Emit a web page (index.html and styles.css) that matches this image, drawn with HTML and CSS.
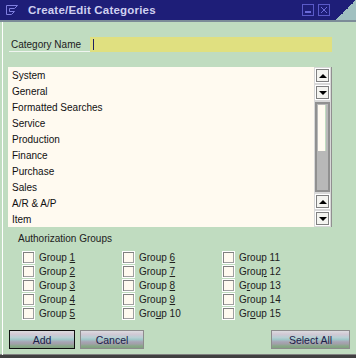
FILE: index.html
```html
<!DOCTYPE html>
<html>
<head>
<meta charset="utf-8">
<link rel="stylesheet" href="styles.css">
</head>
<body>
<div class="win">
  <div class="titlebar">
    <svg class="ticon" width="12" height="10" viewBox="0 0 12 10"><path d="M0.5 0.5 H11.5 L8.5 3.5 H3.5 V6.5 H8.5 L5.5 9.5 H0.5 Z" fill="none" stroke="#8080e0" stroke-width="1"/></svg>
    <span class="ttext">Create/Edit Categories</span>
    <span class="tbtn"><svg width="12" height="12" viewBox="0 0 12 12"><rect x="0.5" y="0.5" width="11" height="11" fill="none" stroke="#5a5ac8"/><rect x="3" y="7" width="6" height="2" fill="#6a6ad8"/></svg></span>
    <span class="tbtn"><svg width="12" height="12" viewBox="0 0 12 12"><rect x="0.5" y="0.5" width="11" height="11" fill="none" stroke="#5a5ac8"/><path d="M3 3 L9 9 M9 3 L3 9" stroke="#6a6ad8" stroke-width="1"/></svg></span>
    <span class="corner"></span>
  </div>
  <div class="content">
    <div class="namerow">
      <span class="namelabel">Category Name</span>
      <span class="nameinput"><span class="caret"></span></span>
    </div>
    <div class="list">
      <div class="items">
        <div class="item">System</div>
        <div class="item">General</div>
        <div class="item">Formatted Searches</div>
        <div class="item">Service</div>
        <div class="item">Production</div>
        <div class="item">Finance</div>
        <div class="item">Purchase</div>
        <div class="item">Sales</div>
        <div class="item">A/R &amp; A/P</div>
        <div class="item">Item</div>
      </div>
      <div class="scroll">
        <span class="sbtn"><span class="up"></span></span>
        <span class="sbtn"><span class="down"></span></span>
        <span class="track"><span class="trackfree"></span><span class="thumb"></span></span>
        <span class="sbtn"><span class="up"></span></span>
        <span class="sbtn"><span class="down"></span></span>
      </div>
    </div>
    <div class="authlabel">Authorization Groups</div>
    <div class="groups">
      <label class="grp"><span class="cb"></span><span>Group <u>1</u></span></label>
      <label class="grp"><span class="cb"></span><span>Group <u>6</u></span></label>
      <label class="grp"><span class="cb"></span><span>Group 11</span></label>
      <label class="grp"><span class="cb"></span><span>Group <u>2</u></span></label>
      <label class="grp"><span class="cb"></span><span>Group <u>7</u></span></label>
      <label class="grp"><span class="cb"></span><span>Grou<u>p</u> 12</span></label>
      <label class="grp"><span class="cb"></span><span>Group <u>3</u></span></label>
      <label class="grp"><span class="cb"></span><span>Group <u>8</u></span></label>
      <label class="grp"><span class="cb"></span><span>G<u>r</u>oup 13</span></label>
      <label class="grp"><span class="cb"></span><span>Group <u>4</u></span></label>
      <label class="grp"><span class="cb"></span><span>Group <u>9</u></span></label>
      <label class="grp"><span class="cb"></span><span>Group 14</span></label>
      <label class="grp"><span class="cb"></span><span>Group <u>5</u></span></label>
      <label class="grp"><span class="cb"></span><span>Gro<u>u</u>p 10</span></label>
      <label class="grp"><span class="cb"></span><span>Gr<u>o</u>up 15</span></label>
    </div>
    <div class="btnrow">
      <span class="btn btn-add">Add</span>
      <span class="btn btn-cancel">Cancel</span>
      <span class="btn btn-all">Select All</span>
    </div>
  </div>
</div>
</body>
</html>
```
FILE: styles.css
```css
html, body { margin: 0; padding: 0; }
body { font-family: "Liberation Sans", Arial, sans-serif; font-size: 10px; color: #101010; background: #c0dcc0; }
.win { width: 356px; height: 358px; background: #c0dcc0; display: flex; flex-direction: column; box-sizing: border-box; border-bottom: 3px solid #404040; box-shadow: inset 0 -1px 0 #808080; overflow: hidden; }
.titlebar { height: 20px; background: #1e1e78; display: flex; align-items: center; border-bottom: 2px solid #7c8c98; flex: none; }
.ticon { margin-left: 6px; margin-top: -1px; }
.ttext { margin-left: 10px; font-weight: bold; font-size: 11.5px; color: #d0d0f0; letter-spacing: 0.2px; }
.tbtn { display: flex; width: 12px; height: 12px; }
.tbtn:nth-of-type(2) { margin-left: auto; }
.tbtn + .tbtn { margin-left: 4px; }
.corner { width: 20px; height: 20px; margin-left: 6px; align-self: flex-start; background: linear-gradient(to bottom right, #1e1e78 50%, #a0c0c0 50%); }
.content { flex: 1; margin-left: 2px; border-left: 1px solid #ffffff; display: flex; flex-direction: column; }
.namerow { display: flex; margin-top: 15px; height: 15px; }
.namelabel { margin-left: 6px; width: 79px; padding-left: 2px; border-bottom: 1px solid #f0f4f0; line-height: 15px; color: #202020; }
.nameinput { width: 242px; height: 15px; background: #e0e080; display: flex; align-items: center; }
.caret { width: 1px; height: 11px; background: #202060; margin-left: 3px; }
.list { margin-top: 15px; margin-left: 5px; width: 324px; height: 160px; background: #fffaf0; display: flex; }
.items { flex: 1; padding-top: 1px; padding-left: 4px; }
.item { height: 16px; line-height: 16px; color: #101010; }
.scroll { width: 18px; background: #d8d8d8; box-shadow: inset -1px 0 #909090; display: flex; flex-direction: column; padding: 1px 2px 1px 1px; box-sizing: border-box; gap: 2px; }
.sbtn { height: 15px; box-sizing: border-box; border: 1px solid #ffffff; box-shadow: inset 1px 1px #808080, inset -1px -1px #808080; background: #f4f4f0; display: flex; align-items: center; justify-content: center; flex: none; }
.up { width: 0; height: 0; border-left: 4px solid transparent; border-right: 4px solid transparent; border-bottom: 4px solid #000; }
.down { width: 0; height: 0; border-left: 4px solid transparent; border-right: 4px solid transparent; border-top: 4px solid #000; }
.track { flex: 1; border: 2px solid #909090; display: flex; flex-direction: column; background: #b8b8b8; }
.trackfree { height: 46px; background: #fffaf0; border-right: 1px solid #c0dcc0; margin: 1px 2px 0 1px; }
.thumb { flex: 1; background: #b8b8b8; }
.authlabel { margin-top: 5px; margin-left: 15px; line-height: 14px; color: #202020; }
.groups { margin-top: 4px; margin-left: 19px; display: grid; grid-template-columns: 100px 100px 100px; grid-auto-rows: 14px; }
.grp { display: flex; align-items: center; color: #202020; white-space: pre; }
.grp u { text-decoration: underline; }
.cb { width: 13px; height: 13px; box-sizing: border-box; border: 1px solid #ffffff; box-shadow: inset 1px 1px #808080, inset -1px -1px #a0a0a0; background: #fffaf0; margin-right: 4px; }
.btnrow { display: flex; margin-top: 10px; padding-left: 6px; padding-right: 6px; }
.btn { height: 19px; box-sizing: border-box; border: 1px solid #8c8c8c; display: flex; align-items: center; justify-content: center; color: #202048; font-size: 10.5px;
  background: linear-gradient(to bottom, #dcdce0 0%, #d0c8d4 20%, #b8d0d4 38%, #a0c8c8 50%, #a8a4b4 64%, #a0a0a8 76%, #88a888 88%, #80a080 100%); }
.btn-add { width: 66px; border-color: #101010; }
.btn-cancel { width: 64px; margin-left: 5px; }
.btn-all { width: 79px; margin-left: auto; }
```
